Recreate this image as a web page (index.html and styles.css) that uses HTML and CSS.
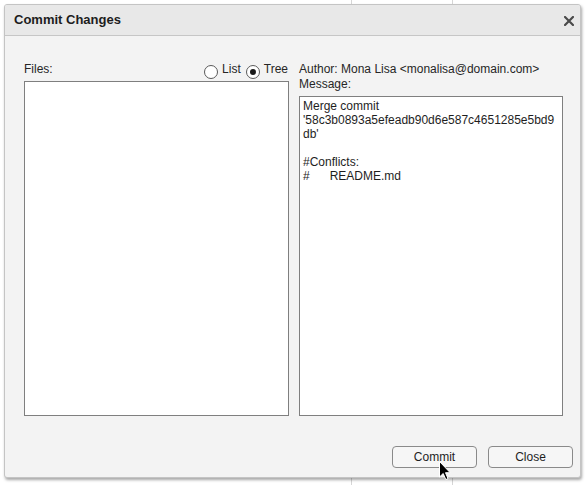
FILE: index.html
```html
<!DOCTYPE html>
<html>
<head>
<meta charset="utf-8">
<title>Commit Changes</title>
<link rel="stylesheet" href="styles.css">
</head>
<body>
<div class="dialog">
  <div class="titlebar">
    <span class="title">Commit Changes</span>
    <span class="close" aria-label="Close">
      <svg width="10" height="10" viewBox="0 0 10 10"><path d="M1 1 L9 9 M9 1 L1 9" stroke="#4a4a4a" stroke-width="2.2" stroke-linecap="square"/></svg>
    </span>
  </div>
  <div class="content">
    <div class="col col-files">
      <div class="files-head">
        <span class="label">Files:</span>
        <div class="radios">
          <span class="radio"><span class="circle"></span><span class="rlabel">List</span></span>
          <span class="radio"><span class="circle checked"></span><span class="rlabel">Tree</span></span>
        </div>
      </div>
      <div class="box files-box"></div>
    </div>
    <div class="col col-msg">
      <div class="label line">Author: Mona Lisa &lt;monalisa@domain.com&gt;</div>
      <div class="label line">Message:</div>
      <div class="box msg-box">Merge commit
'58c3b0893a5efeadb90d6e587c4651285e5bd9db'

#Conflicts:
#	README.md</div>
    </div>
  </div>
  <div class="footer">
    <button class="btn">Commit</button>
    <button class="btn">Close</button>
  </div>
</div>
<svg class="cursor" width="13" height="20" viewBox="0 0 13 20"><path d="M0.5 0.5 L0.5 16 L4.2 12.5 L6.8 18.6 L9 17.6 L6.5 11.7 L11.2 11.7 Z" fill="#000" stroke="#fff" stroke-width="1"/></svg>
</body>
</html>
```
FILE: styles.css
```css
html, body {
  margin: 0;
  padding: 0;
}
body {
  width: 585px;
  height: 485px;
  overflow: hidden;
  position: relative;
  font-family: "Liberation Sans", Arial, sans-serif;
  font-size: 12px;
  color: #222;
  background:
    linear-gradient(#d6d6d6, #d6d6d6) 351px 0 / 1px 100% no-repeat,
    linear-gradient(#d6d6d6, #d6d6d6) 452px 0 / 1px 100% no-repeat,
    #ffffff;
}
.dialog {
  box-sizing: border-box;
  margin: 4px 0 0 4px;
  width: 577px;
  height: 474px;
  border: 1px solid #c4c4c4;
  border-radius: 3px;
  background: #f3f3f3;
  box-shadow: 1px 2px 3px rgba(0,0,0,0.35);
  display: flex;
  flex-direction: column;
  overflow: hidden;
}
.titlebar {
  height: 30px;
  flex: none;
  background: #e8e8e8;
  border-bottom: 1px solid #c6c6c6;
  display: flex;
  align-items: center;
  justify-content: space-between;
  padding: 0 6px 0 9px;
}
.title {
  font-size: 13px;
  font-weight: bold;
  color: #1d1d1d;
  line-height: 30px;
}
.close {
  display: flex;
  width: 10px;
  height: 10px;
  margin-top: 1px;
}
.content {
  display: flex;
  gap: 10px;
  padding: 26px 17px 0 19px;
  height: 354px;
  flex: none;
}
.col {
  display: flex;
  flex-direction: column;
}
.col-files {
  width: 265px;
}
.col-msg {
  width: 264px;
}
.label {
  line-height: 15px;
  color: #262626;
}
.files-head {
  height: 19px;
  display: flex;
  justify-content: space-between;
  align-items: flex-start;
}
.radios {
  display: flex;
  gap: 5px;
  margin-right: 1px;
}
.radio {
  display: flex;
  align-items: flex-start;
  gap: 4px;
}
.circle {
  flex: none;
  box-sizing: border-box;
  width: 14px;
  height: 14px;
  margin-top: 3px;
  border: 1px solid #5a5a5a;
  border-radius: 50%;
  background: #fff;
  display: flex;
  align-items: center;
  justify-content: center;
}
.circle.checked::after {
  content: "";
  width: 6px;
  height: 6px;
  border-radius: 50%;
  background: #1a1a1a;
}
.rlabel {
  line-height: 15px;
  color: #262626;
}
.box {
  box-sizing: border-box;
  background: #fff;
  border: 1px solid #7f7f7f;
  flex: 1;
}
.msg-box {
  margin-top: 4px;
  padding: 2px 3px;
  line-height: 14px;
  white-space: pre-wrap;
  word-break: break-all;
  tab-size: 8;
  color: #1e1e1e;
}
.footer {
  display: flex;
  justify-content: flex-end;
  gap: 11px;
  padding: 30px 7px 0 0;
}
.btn {
  box-sizing: border-box;
  width: 85px;
  height: 22px;
  border: 1px solid #8a8a8a;
  border-radius: 4px;
  background: #f6f6f6;
  font-family: "Liberation Sans", Arial, sans-serif;
  font-size: 12px;
  color: #1e1e1e;
  padding: 0;
  line-height: 20px;
}
.cursor {
  position: absolute;
  left: 439px;
  top: 461px;
}
```
